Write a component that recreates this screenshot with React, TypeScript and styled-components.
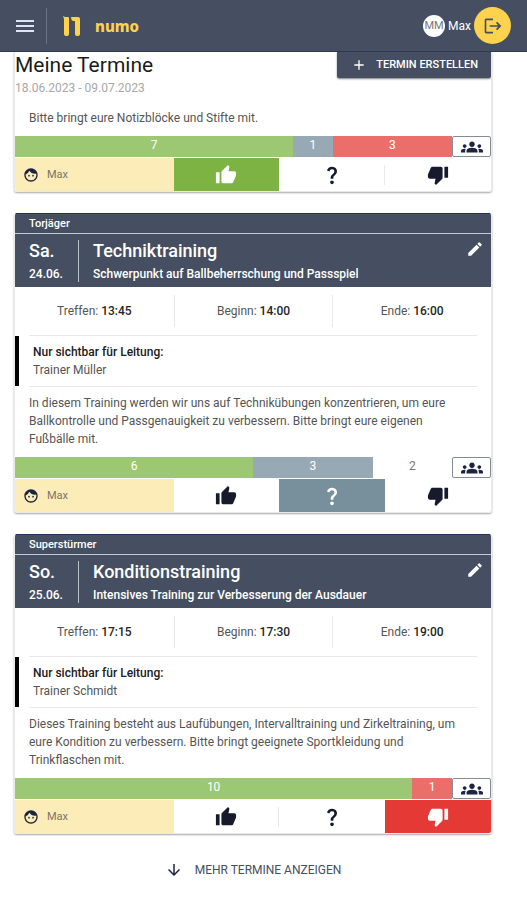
import React from "react";
import styled, { createGlobalStyle, css } from "styled-components";
import {
  MdAdd,
  MdArrowDownward,
  MdEdit,
  MdFace,
  MdGroups,
  MdLogout,
  MdMenu,
  MdQuestionMark,
  MdThumbDown,
  MdThumbUp,
} from "react-icons/md";

const color = {
  slate: "#454f61",
  navy: "#1d2440",
  yellow: "#fdd24f",
  cream: "#fcecb8",
  line: "#e9e9e9",
  text: "#555",
  green: "#7cb342",
  greenSoft: "#9dc873",
  grey: "#78909c",
  greySoft: "#98a9b6",
  red: "#e53935",
  redSoft: "#ec6e6b",
};

const GlobalStyle = createGlobalStyle`
  *, *::before, *::after { box-sizing: border-box; }
  body {
    margin: 0;
    background: #fff;
    color: ${color.text};
    font: 400 12px/18px Roboto, sans-serif;
  }
  h1, h2, p { margin: 0; }
  button { font: inherit; color: inherit; border: 0; padding: 0; background: none; cursor: pointer; }
  svg { display: block; flex: none; }
`;

const TopBar = styled.header`
  display: flex;
  align-items: center;
  height: 52px;
  padding: 0 16px 0 13px;
  background: ${color.slate};
  border-bottom: 1px solid #2e3a58;
  color: #fff;
`;

const MenuButton = styled.button`
  display: flex;
  padding-right: 9px;
  color: #dfe3f2;
`;

const BarDivider = styled.span`
  width: 1px;
  height: 36px;
  margin-right: 16px;
  background: #6b7484;
`;

const Brand = styled.a`
  display: flex;
  align-items: center;
  gap: 14px;
  color: ${color.yellow};
  font: 800 15px/20px "Noto Sans", sans-serif;
  text-decoration: none;
`;

const Account = styled.div`
  display: flex;
  align-items: center;
  gap: 3px;
  margin-left: auto;
  font-size: 12px;
`;

const Avatar = styled.span`
  display: grid;
  place-items: center;
  width: 22px;
  height: 22px;
  border-radius: 50%;
  background: #fff;
  color: #777;
  font-size: 11px;
`;

const LogoutButton = styled.button`
  display: grid;
  place-items: center;
  width: 37px;
  height: 37px;
  border-radius: 50%;
  background: ${color.yellow};
  color: ${color.slate};
`;

const Page = styled.main`
  display: flex;
  flex-direction: column;
  gap: 21px;
  padding: 0 35px 0 14px;
`;

const Card = styled.article<{ $open?: boolean }>`
  border: 1px solid ${color.line};
  border-top: 0;
  border-radius: ${(p) => (p.$open ? "0 0 3px 3px" : "3px")};
  box-shadow: 0 1px 2px rgba(0, 0, 0, 0.35);
  overflow: hidden;
`;

const PageHead = styled.div`
  display: flex;
  align-items: flex-start;
  justify-content: space-between;
  height: 50px;
`;

const Title = styled.h1`
  color: #1b1b1b;
  font-size: 21px;
  font-weight: 400;
  line-height: 27px;
`;

const Range = styled.p`
  color: #a8a8a8;
`;

const CreateButton = styled.button`
  display: flex;
  align-items: center;
  gap: 9px;
  height: 26px;
  padding: 0 13px 0 14px;
  border-radius: 0 0 2px 2px;
  background: ${color.slate};
  box-shadow: 0 1px 2px rgba(0, 0, 0, 0.5);
  color: #fff;
  font-size: 11px;
  font-weight: 500;
`;

const Team = styled.div`
  height: 20px;
  padding-left: 14px;
  background: ${color.slate};
  border-top: 1px solid #26345a;
  color: #fff;
  font-size: 11px;
  font-weight: 500;
  line-height: 19px;
`;

const EventHead = styled.header`
  display: flex;
  height: 54px;
  padding: 6px 7px 5px 14px;
  border-top: 1px solid #c3cbd0;
  background: ${color.slate};
  color: #fff;
`;

const DateColumn = styled.div`
  width: 50px;
  border-right: 1px solid #b9c0ca;
`;

const Names = styled.div`
  flex: 1;
  padding-left: 14px;
`;

const Big = styled.h2`
  font-size: 18px;
  font-weight: 500;
  line-height: 22px;
`;

const Small = styled.p`
  padding-top: 3px;
  font-size: 12px;
  font-weight: 500;
  line-height: 18px;
`;

const EditButton = styled.button`
  align-self: flex-start;
`;

const Times = styled.div`
  display: grid;
  grid-template-columns: repeat(3, 1fr);
  padding: 8px 0;
`;

const Time = styled.div`
  padding: 7px 0;
  text-align: center;
  & + & { border-left: 1px solid ${color.line}; }
  strong { color: #252525; font-weight: 500; }
`;

const Rule = styled.hr`
  height: 1px;
  margin: 0 14px;
  border: 0;
  background: ${color.line};
`;

const Note = styled.div`
  padding: 7px 14px;
  border-left: 4px solid #000;
  strong { display: block; color: #202020; font-weight: 500; }
`;

const Description = styled.p`
  padding: 7px 30px 9px 14px;
  line-height: 18px;
`;

const Stats = styled.div`
  display: flex;
  height: 22px;
  padding-bottom: 1px;
`;

type Answer = "yes" | "maybe" | "no" | "open";

const softColor: Record<Answer, string> = {
  yes: color.greenSoft,
  maybe: color.greySoft,
  no: color.redSoft,
  open: "#fff",
};

const Share = styled.span<{ $answer: Answer; $count: number }>`
  flex: ${(p) => p.$count} 1 0;
  background: ${(p) => softColor[p.$answer]};
  color: ${(p) => (p.$answer === "open" ? "#777" : "#fff")};
  line-height: 19px;
  text-align: center;
`;

const GroupButton = styled.button`
  display: grid;
  place-content: center;
  width: 39px;
  height: 21px;
  border: 1px solid #858b96;
  border-radius: 2px;
  color: ${color.navy};
`;

const Votes = styled.div`
  display: grid;
  grid-template-columns: 3fr 2fr 2fr 2fr;
  height: 33px;
`;

const Person = styled.div`
  display: flex;
  align-items: center;
  gap: 8px;
  padding-left: 8px;
  background: ${color.cream};
  color: #7a7468;
  font-size: 11px;
  svg { color: ${color.navy}; }
`;

const strongColor = { yes: color.green, maybe: color.grey, no: color.red };

const Vote = styled.button<{ $answer: "yes" | "maybe" | "no"; $divided: boolean }>`
  display: grid;
  grid-template-columns: 1fr 1px;
  align-items: center;
  justify-items: center;
  color: #161a2c;
  ${(p) =>
    p.$divided &&
    css`
      &::after { content: ""; width: 1px; height: 20px; background: ${color.line}; }
    `}
  &[aria-pressed="true"] {
    background: ${(p) => strongColor[p.$answer]};
    color: #fff;
  }
`;

const MoreButton = styled.button`
  display: flex;
  align-items: center;
  align-self: center;
  gap: 12px;
  margin-top: 6px;
  color: ${color.slate};
  svg { color: ${color.navy}; }
`;

const Logo = () => (
  <svg width="18" height="20" viewBox="0 0 18 20" fill="currentColor" aria-hidden="true">
    <path d="M0 0 L2 1 H5 Q6 1 6 2 V18 Q6 20 4 20 H3 Q1 20 1 18 V3 Z" />
    <path d="M8 1 H15 Q17 1 17 3 V18 Q17 20 15 20 H14 Q12 20 12 18 V5 H10 Q8 4 8 1 Z" />
  </svg>
);

type Choice = "yes" | "maybe" | "no";

function Answers({ stats, chosen }: { stats: [Answer, number][]; chosen: Choice }) {
  const choices: [Choice, string, React.ReactNode][] = [
    ["yes", "Zusagen", <MdThumbUp size={22} />],
    ["maybe", "Unsicher", <MdQuestionMark size={22} />],
    ["no", "Absagen", <MdThumbDown size={22} />],
  ];
  return (
    <>
      <Stats>
        {stats.map(([answer, count]) => (
          <Share key={answer} $answer={answer} $count={count}>
            {count}
          </Share>
        ))}
        <GroupButton aria-label="Teilnehmer">
          <MdGroups size={22} />
        </GroupButton>
      </Stats>
      <Votes>
        <Person>
          <MdFace size={16} />
          Max
        </Person>
        {choices.map(([answer, label, icon], i) => (
          <Vote
            key={answer}
            $answer={answer}
            $divided={i < 2 && choices[i][0] !== chosen && choices[i + 1][0] !== chosen}
            aria-label={label}
            aria-pressed={answer === chosen}
          >
            {icon}
          </Vote>
        ))}
      </Votes>
    </>
  );
}

interface Training {
  team: string;
  day: string;
  date: string;
  name: string;
  focus: string;
  times: [string, string][];
  trainer: string;
  description: string;
  stats: [Answer, number][];
  chosen: Choice;
}

const trainings: Training[] = [
  {
    team: "Torjäger",
    day: "Sa.",
    date: "24.06.",
    name: "Techniktraining",
    focus: "Schwerpunkt auf Ballbeherrschung und Passspiel",
    times: [["Treffen", "13:45"], ["Beginn", "14:00"], ["Ende", "16:00"]],
    trainer: "Trainer Müller",
    description:
      "In diesem Training werden wir uns auf Technikübungen konzentrieren, um eure Ballkontrolle und Passgenauigkeit zu verbessern. Bitte bringt eure eigenen Fußbälle mit.",
    stats: [["yes", 6], ["maybe", 3], ["open", 2]],
    chosen: "maybe",
  },
  {
    team: "Superstürmer",
    day: "So.",
    date: "25.06.",
    name: "Konditionstraining",
    focus: "Intensives Training zur Verbesserung der Ausdauer",
    times: [["Treffen", "17:15"], ["Beginn", "17:30"], ["Ende", "19:00"]],
    trainer: "Trainer Schmidt",
    description:
      "Dieses Training besteht aus Laufübungen, Intervalltraining und Zirkeltraining, um eure Kondition zu verbessern. Bitte bringt geeignete Sportkleidung und Trinkflaschen mit.",
    stats: [["yes", 10], ["no", 1]],
    chosen: "no",
  },
];

export default function App() {
  return (
    <>
      <GlobalStyle />
      <TopBar>
        <MenuButton aria-label="Menü">
          <MdMenu size={24} />
        </MenuButton>
        <BarDivider />
        <Brand href="#">
          <Logo />
          numo
        </Brand>
        <Account>
          <Avatar>MM</Avatar>
          Max
          <LogoutButton aria-label="Abmelden">
            <MdLogout size={20} />
          </LogoutButton>
        </Account>
      </TopBar>
      <Page>
        <Card $open>
          <PageHead>
            <div>
              <Title>Meine Termine</Title>
              <Range>18.06.2023 - 09.07.2023</Range>
            </div>
            <CreateButton>
              <MdAdd size={16} />
              TERMIN ERSTELLEN
            </CreateButton>
          </PageHead>
          <Description>Bitte bringt eure Notizblöcke und Stifte mit.</Description>
          <Answers stats={[["yes", 7], ["maybe", 1], ["no", 3]]} chosen="yes" />
        </Card>
        {trainings.map((t) => (
          <Card key={t.team}>
            <Team>{t.team}</Team>
            <EventHead>
              <DateColumn>
                <Big as="p">{t.day}</Big>
                <Small>{t.date}</Small>
              </DateColumn>
              <Names>
                <Big>{t.name}</Big>
                <Small>{t.focus}</Small>
              </Names>
              <EditButton aria-label="Bearbeiten">
                <MdEdit size={18} />
              </EditButton>
            </EventHead>
            <Times>
              {t.times.map(([label, time]) => (
                <Time key={label}>
                  {label}: <strong>{time}</strong>
                </Time>
              ))}
            </Times>
            <Rule />
            <Note>
              <strong>Nur sichtbar für Leitung:</strong>
              {t.trainer}
            </Note>
            <Rule />
            <Description>{t.description}</Description>
            <Answers stats={t.stats} chosen={t.chosen} />
          </Card>
        ))}
        <MoreButton>
          <MdArrowDownward size={18} />
          MEHR TERMINE ANZEIGEN
        </MoreButton>
      </Page>
    </>
  );
}
